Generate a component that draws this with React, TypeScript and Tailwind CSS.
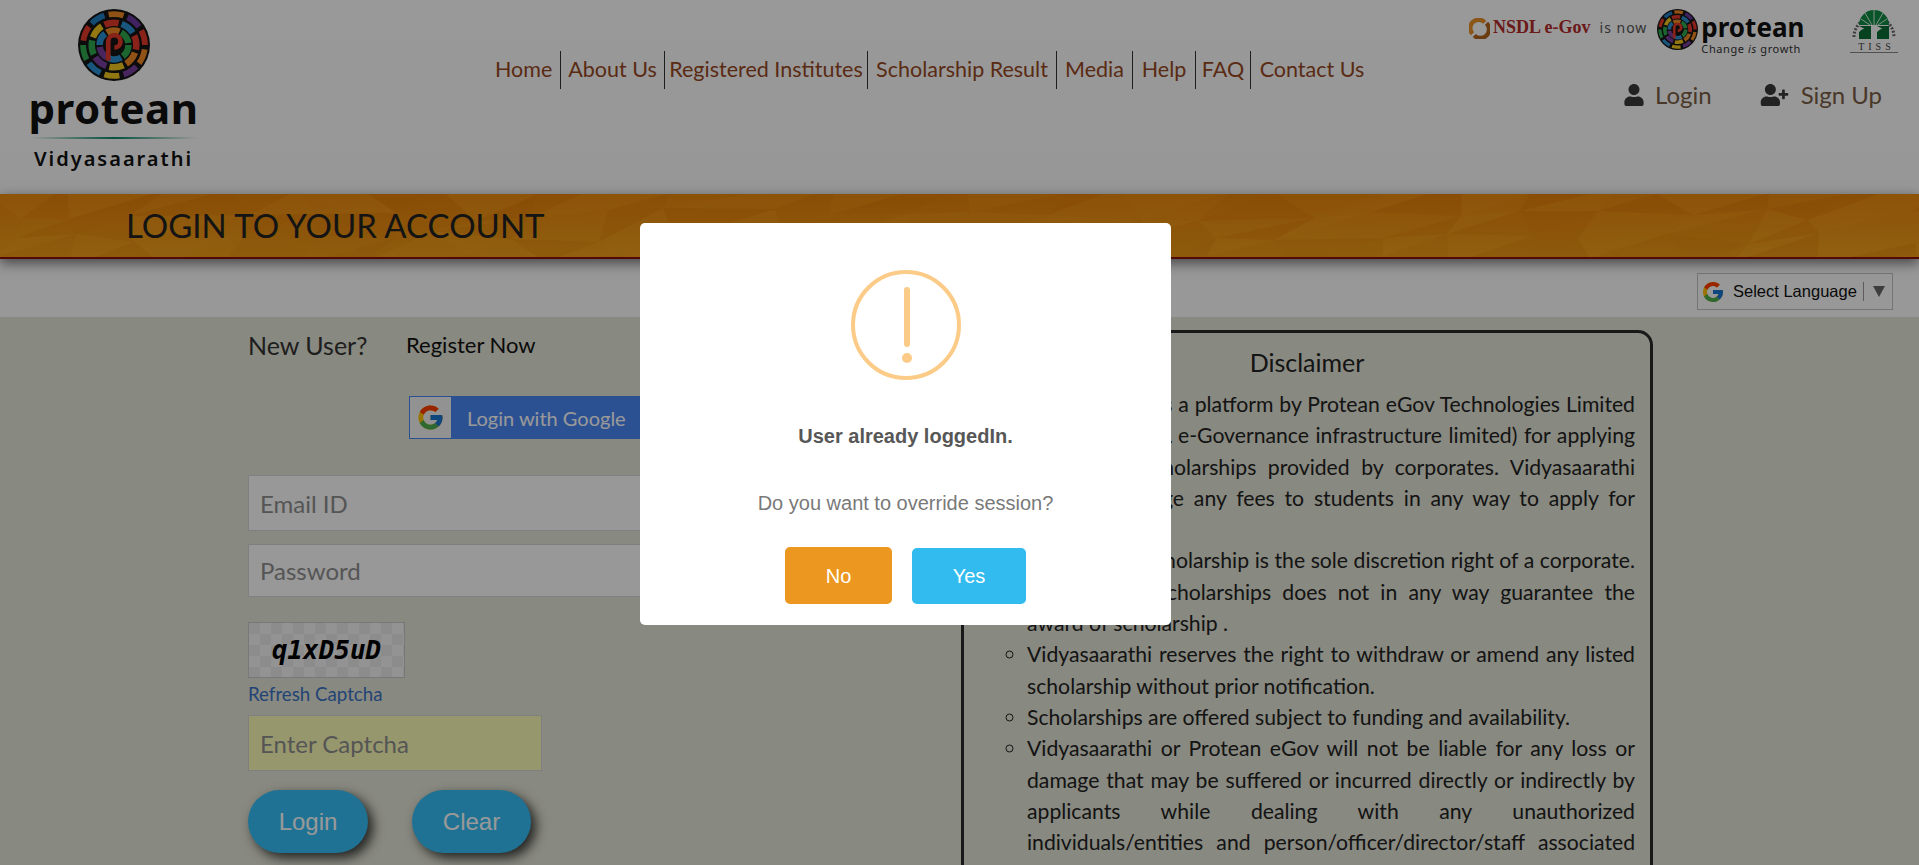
import React from "react";
import { FaUser, FaUserPlus } from "react-icons/fa";
import { FcGoogle } from "react-icons/fc";

const sans = "font-['Lato','Open_Sans',sans-serif]";

function arc(cx: number, cy: number, r: number, a0: number, a1: number) {
  const p = (a: number) => [cx + r * Math.cos((a * Math.PI) / 180), cy + r * Math.sin((a * Math.PI) / 180)];
  const [x0, y0] = p(a0);
  const [x1, y1] = p(a1);
  return `M${x0.toFixed(2)} ${y0.toFixed(2)}A${r} ${r} 0 ${a1 - a0 > 180 ? 1 : 0} 1 ${x1.toFixed(2)} ${y1.toFixed(2)}`;
}

const RINGS: { r: number; w: number; n: number; off: number; colors: string[] }[] = [
  { r: 43, w: 8, n: 10, off: 8, colors: ["#f08a24", "#7a3fa0", "#f2c81e", "#2b8fd0", "#2fa84f", "#e5392b", "#1f7fc4", "#f08a24", "#6b3aa0", "#e5392b"] },
  { r: 31, w: 9, n: 8, off: 20, colors: ["#f08a24", "#f2c81e", "#7a3fa0", "#2fa84f", "#f2c81e", "#e5392b", "#2b8fd0", "#e5392b"] },
  { r: 20, w: 9, n: 6, off: 0, colors: ["#2fa84f", "#2b8fd0", "#7a3fa0", "#2b8fd0", "#f08a24", "#2fa84f"] },
];

function ProteanMark({ className }: { className: string }) {
  return (
    <svg viewBox="0 0 100 100" className={className}>
      <circle cx="50" cy="50" r="50" fill="#141414" />
      {RINGS.map((ring) =>
        ring.colors.map((c, i) => {
          const step = 360 / ring.n;
          const a0 = ring.off + i * step;
          return <path key={`${ring.r}-${i}`} d={arc(50, 50, ring.r, a0, a0 + step - 8)} fill="none" stroke={c} strokeWidth={ring.w} />;
        })
      )}
      <circle cx="50" cy="45" r="11" fill="#141414" />
      <path d="M42 72V45A8.5 8.5 0 1 1 50.5 53.5" fill="none" stroke="#e5392b" strokeWidth="6.5" />
    </svg>
  );
}

function TissMark() {
  return (
    <div className="relative flex h-[54px] w-[48px] flex-col items-center">
      <svg viewBox="0 0 48 40" className="h-[40px] w-[48px]">
        <path d="M4 36A20 20 0 0 1 44 36" fill="none" stroke="#666" strokeWidth="3" strokeDasharray="2 1.5" />
        <path d="M9 24A15 15 0 0 1 39 24Z" fill="#0f8a45" />
        <path d="M24 9V24M15 12L22 24M33 12L26 24M11 18L20 24M37 18L28 24" stroke="#dff0e4" strokeWidth="1" />
        <path d="M9 25H21V38H9V31Q15 24 21 31ZM27 25H39V38H27V31Q33 24 39 31Z" fill="#0a6e36" />
      </svg>
      <span className="pl-1 font-['Liberation_Serif',serif] text-[10px] leading-[11px] tracking-[4px] text-[#444]">TISS</span>
      <div className="h-px w-full bg-[#888]" />
    </div>
  );
}

function Header() {
  const nav: [string, string][] = [
    ["Home", "w-[73px] pl-[7px] text-left"],
    ["About Us", "w-[104px]"],
    ["Registered Institutes", "w-[203px]"],
    ["Scholarship Result", "w-[189px]"],
    ["Media", "w-[76px]"],
    ["Help", "w-[63px]"],
    ["FAQ", "w-[55px]"],
    ["Contact Us", "w-[122px] border-r-0"],
  ];
  return (
    <header className="flex h-[194px] bg-gradient-to-b from-[#ffffff] to-[#fcfcfc]">
      <div className="flex w-[226px] shrink-0 flex-col items-center pl-[1px] pt-[9px]">
        <ProteanMark className="h-[72px] w-[72px]" />
        <div className="mt-[2px] font-['Noto_Sans',sans-serif] text-[42px] font-bold leading-[50px] tracking-[0.5px] text-[#111]">protean</div>
        <div className="mt-[4px] h-[2px] w-[166px] bg-gradient-to-r from-transparent via-[#0b8a68] to-transparent" />
        <div className="mt-[8px] font-['Noto_Sans',sans-serif] text-[20px] font-semibold leading-[24px] tracking-[2px] text-[#111]">Vidyasaarathi</div>
      </div>
      <nav className={`ml-[262px] mt-[51px] flex h-[38px] ${sans} text-[21.5px] leading-[36px] text-[#96481f]`}>
        {nav.map(([t, c]) => (
          <a key={t} className={`block shrink-0 border-r border-[#333] text-center whitespace-nowrap ${c}`}>{t}</a>
        ))}
      </nav>
      <div className="ml-auto flex w-[451px] shrink-0 flex-col">
        <div className="flex items-start pl-[1px] pt-[1px]">
          <svg viewBox="0 0 24 24" className="mt-[17px] h-[21px] w-[21px]">
            <path d="M4 18A9 9 0 0 1 18 5" fill="none" stroke="#e8912a" strokeWidth="5" />
            <path d="M20 6A9 9 0 0 1 6 20" fill="none" stroke="#b5651d" strokeWidth="5" />
          </svg>
          <span className="ml-[3px] mt-[13px] whitespace-nowrap font-['Liberation_Serif',serif] text-[18px] font-bold leading-[26px] text-[#b32a2a]">NSDL e-Gov</span>
          <span className="ml-[9px] mt-[17px] whitespace-nowrap font-['Noto_Sans',sans-serif] text-[14px] leading-[20px] tracking-[1px] text-[#555]">is now</span>
          <ProteanMark className="ml-[10px] mt-[8px] h-[41px] w-[41px] shrink-0" />
          <div className="ml-[3px] mt-[11px] flex flex-col whitespace-nowrap font-['Noto_Sans',sans-serif]">
            <span className="text-[26px] font-bold leading-[30px] text-[#111]">protean</span>
            <span className="text-[11px] leading-[14px] tracking-[0.6px] text-[#333]">Change <i>is</i> growth</span>
          </div>
          <div className="ml-[46px]"><TissMark /></div>
        </div>
        <div className={`mt-[24px] flex items-center ${sans} text-[24px] leading-[30px] text-[#7b5d45]`}>
          <FaUser className="ml-[156px] h-[22px] w-[20px] text-[#3a3a3a]" />
          <span className="ml-[11px]">Login</span>
          <FaUserPlus className="ml-[48px] h-[22px] w-[29px] text-[#3a3a3a]" />
          <span className="ml-[12px]">Sign Up</span>
        </div>
      </div>
    </header>
  );
}

function mesh() {
  let s = 11;
  const rnd = () => {
    s = (s * 16807) % 2147483647;
    return s / 2147483647;
  };
  const cols = 26;
  const rows = 3;
  const pts: number[][][] = [];
  for (let r = 0; r <= rows; r++) {
    pts.push([]);
    for (let c = 0; c <= cols; c++) {
      pts[r].push([c * 76 + (rnd() - 0.5) * 46, r * 24 + (rnd() - 0.5) * 14 - 4]);
    }
  }
  const tris: { d: string; f: string; o: number }[] = [];
  for (let r = 0; r < rows; r++) {
    for (let c = 0; c < cols; c++) {
      const a = pts[r][c], b = pts[r][c + 1], d = pts[r + 1][c], e = pts[r + 1][c + 1];
      [[a, b, d], [b, e, d]].forEach((t) => {
        const lite = rnd() > 0.5;
        tris.push({
          d: t.map((p) => p.map((v) => v.toFixed(0)).join(",")).join(" "),
          f: lite ? "#ffb030" : "#d66a00",
          o: 0.05 + rnd() * 0.13,
        });
      });
    }
  }
  return tris;
}
const TRIS = mesh();

function Banner() {
  return (
    <div className="relative z-10 h-[65px] overflow-hidden border-b-2 border-[#8c1208] bg-gradient-to-b from-[#e8850c] to-[#f09e18] shadow-[0_4px_12px_rgba(0,0,0,0.55)]">
      <svg viewBox="0 0 1919 63" className="absolute inset-0 h-[63px] w-full" preserveAspectRatio="none">
        {TRIS.map((t, i) => (
          <polygon key={i} points={t.d} fill={t.f} opacity={t.o} />
        ))}
      </svg>
      <h1 className={`relative whitespace-nowrap pl-[126px] ${sans} text-[33px] font-normal leading-[63px] text-[#222]`}>LOGIN TO YOUR ACCOUNT</h1>
    </div>
  );
}

function LangBar() {
  return (
    <div className="flex h-[58px] justify-end bg-[#fdfdfd] pr-[26px] pt-[14px]">
      <div className="flex h-[37px] w-[196px] items-center border border-[#c4c4c4] bg-[#fdfdfd] font-['Liberation_Sans',Arial,sans-serif] text-[16.5px] text-[#111]">
        <FcGoogle className="ml-[3px] h-[24px] w-[24px] shrink-0" />
        <span className="ml-[8px] whitespace-nowrap">Select Language</span>
        <span className="ml-[6px] h-[19px] w-px shrink-0 bg-[#999]" />
        <span className="ml-[9px] h-0 w-0 shrink-0 border-x-[6.5px] border-t-[11px] border-x-transparent border-t-[#666]" />
      </div>
    </div>
  );
}

function LoginForm() {
  const field = `block border border-[#d4d4d4] ${sans} text-[24px] text-[#333] outline-none placeholder:text-[#8e8e8e]`;
  return (
    <div className={`w-[713px] shrink-0 ${sans}`}>
      <div className="flex pt-[13px] text-[25px] leading-[30px]">
        <span className="w-[158px] text-[#333]">New User?</span>
        <a className="text-[22px] text-[#111]">Register Now</a>
      </div>
      <a className="ml-[161px] mt-[36px] flex h-[43px] w-[272px] items-center border border-[#4a87f5] bg-[#4a87f5]">
        <span className="flex h-full w-[41px] items-center justify-center bg-[#f4f4f4]">
          <FcGoogle className="h-[29px] w-[29px]" />
        </span>
        <span className="ml-[16px] whitespace-nowrap text-[20px] text-[#fff]">Login with Google</span>
      </a>
      <input className={`${field} mt-[36px] h-[56px] w-[550px] bg-[#fdfdfd] px-[11px]`} placeholder="Email ID" />
      <input className={`${field} mt-[13px] h-[53px] w-[550px] bg-[#fdfdfd] px-[11px]`} placeholder="Password" />
      <div className="mt-[25px] flex h-[56px] w-[157px] items-center justify-center border border-[#c8c8c8] bg-[repeating-conic-gradient(#f6f6f6_0_25%,#eaeaea_0_50%)] bg-[size:22px_22px]">
        <span className="font-['DejaVu_Sans_Mono',monospace] text-[26px] font-bold italic text-[#000]">q1xD5uD</span>
      </div>
      <a className="mt-[4px] block text-[18.7px] leading-[24px] text-[#3a72c4]">Refresh Captcha</a>
      <input className={`${field} mt-[9px] h-[56px] w-[294px] bg-[#fcfcb8] px-[11px]`} placeholder="Enter Captcha" />
      <div className="mt-[19px] flex gap-[44px] font-['Liberation_Sans',Arial,sans-serif] text-[24px] text-white">
        <button className="h-[63px] w-[120px] rounded-[32px] bg-[#34bff7] shadow-[5px_5px_12px_rgba(0,0,0,0.75)]">Login</button>
        <button className="h-[63px] w-[119px] rounded-[32px] bg-[#34bff7] shadow-[5px_5px_12px_rgba(0,0,0,0.75)]">Clear</button>
      </div>
    </div>
  );
}

function Disclaimer() {
  const items = [
    "Vidyasaarathi is a platform by Protean eGov Technologies Limited (formerly NSDL e-Governance infrastructure limited) for applying for various scholarships provided by corporates. Vidyasaarathi does not charge any fees to students in any way to apply for scholarships.",
    "Awarding of scholarship is the sole discretion right of a corporate. Applying for scholarships does not in any way guarantee the award of scholarship .",
    "Vidyasaarathi reserves the right to withdraw or amend any listed scholarship without prior notification.",
    "Scholarships are offered subject to funding and availability.",
    "Vidyasaarathi or Protean eGov will not be liable for any loss or damage that may be suffered or incurred directly or indirectly by applicants while dealing with any unauthorized individuals/entities and person/officer/director/staff associated with Vidyasaarathi.",
  ];
  return (
    <div className={`mt-[13px] h-[600px] w-[692px] shrink-0 rounded-[15px] border-[3px] border-[#2a2a2a] ${sans} text-[#222]`}>
      <h2 className="pt-[14px] text-center text-[25px] font-normal leading-[30px]">Disclaimer</h2>
      <ul className="mt-[12px] list-[circle] pl-[63px] pr-[15px] text-[21.2px] leading-[31.3px]">
        {items.map((t) => (
          <li key={t} className="text-justify">{t}</li>
        ))}
      </ul>
    </div>
  );
}

function Modal() {
  return (
    <div className="fixed inset-0 z-20 bg-black/40">
      <div className="absolute left-[640px] top-[223px] flex h-[402px] w-[531px] flex-col items-center rounded-[5px] bg-white pt-[47px] font-['Liberation_Sans',Arial,sans-serif]">
        <div className="relative h-[110px] w-[110px] rounded-full border-[4px] border-[#fbcb87]">
          <span className="absolute left-[49px] top-[13px] h-[60px] w-[6px] rounded-[3px] bg-[#fbcb87]" />
          <span className="absolute left-[47px] top-[79px] h-[10px] w-[10px] rounded-full bg-[#fbcb87]" />
        </div>
        <h2 className="mt-[44px] text-[20px] font-bold leading-[24px] text-[#575757]">User already loggedIn.</h2>
        <p className="mt-[43px] text-[20px] leading-[24px] text-[#797979]">Do you want to override session?</p>
        <div className="mt-[32px] flex gap-[20px] text-[20px] text-white">
          <button className="h-[57px] w-[107px] rounded-[5px] bg-[#ec971f]">No</button>
          <button className="mt-[1px] h-[56px] w-[114px] rounded-[5px] bg-[#31bbee]">Yes</button>
        </div>
      </div>
    </div>
  );
}

export default function App() {
  return (
    <div className="relative h-[865px] overflow-hidden bg-[#e3e4d6]">
      <Header />
      <Banner />
      <LangBar />
      <main className="flex pl-[248px]">
        <LoginForm />
        <Disclaimer />
      </main>
      <Modal />
    </div>
  );
}
